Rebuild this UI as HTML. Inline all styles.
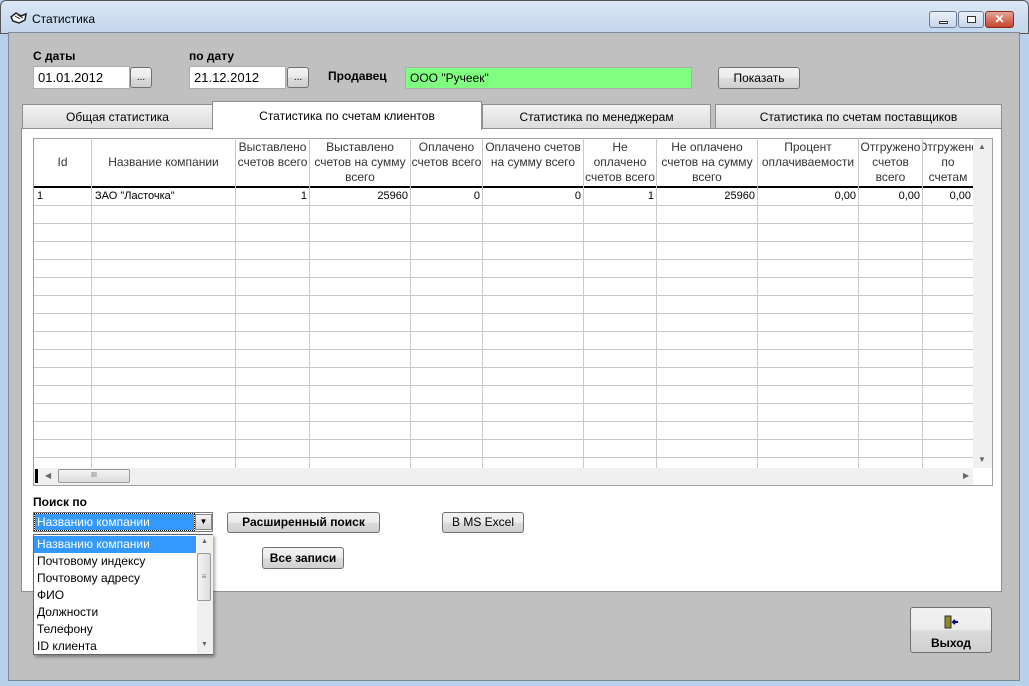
<!DOCTYPE html>
<html><head><meta charset="utf-8"><style>
*{margin:0;padding:0;box-sizing:border-box}
body{width:1029px;height:686px;overflow:hidden;background:#b9d1ea;font-family:"Liberation Sans",sans-serif;font-size:12px;color:#000;position:relative}
.a{position:absolute}
.btn{position:absolute;border:1px solid #707070;border-radius:3px;background:linear-gradient(#f2f2f2,#ebebeb 50%,#dcdcdc 51%,#cfcfcf);text-align:center}
.inp{position:absolute;background:#fff;border:1px solid #abadb3;padding:3px 0 0 4px;font-size:13px}
.tab{position:absolute;top:104px;height:25px;border:1px solid #8e8f8f;background:linear-gradient(#f2f2f2,#dcdcdc);text-align:center;font-size:12px;line-height:24px}
.vl{position:absolute;top:138px;height:330px;width:1px;background:#c8c8c8}
.h{position:absolute;top:139px;height:47px;display:flex;align-items:center;justify-content:center;text-align:center;line-height:15px;color:#333;font-size:12px;white-space:nowrap}
.c{position:absolute;top:189px;font-size:11px;line-height:15px}
.li{height:17px;line-height:17px;padding-left:3px;font-size:12px}
</style></head><body>
<div class="a" style="left:0;top:0;width:1029px;height:34px;background:linear-gradient(#dbe7f4,#c3d6ec);border:1px solid #555;border-radius:6px 6px 0 0"></div>
<svg class="a" style="left:10px;top:11px" width="18" height="14" viewBox="0 0 18 14"><path d="M1 6L6 2L11 5L16 3L15 9L9 12L3 10Z" fill="#fff" stroke="#222" stroke-width="1.5"/><path d="M5 5L10 8M8 4L13 7" stroke="#222"/></svg>
<div class="a" style="left:32px;top:12px;font-size:12px">Статистика</div>
<div class="a" style="left:929px;top:11px;width:28px;height:17px;border:1px solid #6b7d96;border-radius:3px;background:linear-gradient(#e9f0f8,#c8d6e8)"><div class="a" style="left:9px;top:9px;width:9px;height:3px;border:1px solid #333;background:#fff"></div></div>
<div class="a" style="left:958px;top:11px;width:26px;height:17px;border:1px solid #6b7d96;border-radius:3px;background:linear-gradient(#e9f0f8,#c8d6e8)"><div class="a" style="left:8px;top:4px;width:9px;height:7px;border:1px solid #333;background:#fff"></div></div>
<div class="a" style="left:985px;top:11px;width:29px;height:17px;border:1px solid #8a2a1c;border-radius:3px;background:linear-gradient(#e8a496,#c4442c);color:#fff;font-weight:bold;text-align:center;line-height:15px;font-size:12px">✕</div>
<div class="a" style="left:8px;top:32px;width:1012px;height:649px;background:#c0c0c0;border:1px solid #7f8a99"></div>
<div class="a" style="left:33px;top:49px;font-weight:bold">С даты</div>
<div class="a" style="left:189px;top:49px;font-weight:bold">по дату</div>
<div class="inp" style="left:33px;top:66px;width:97px;height:23px">01.01.2012</div>
<div class="btn" style="left:130px;top:67px;width:22px;height:21px;font-size:10px;line-height:20px">...</div>
<div class="inp" style="left:189px;top:66px;width:97px;height:23px">21.12.2012</div>
<div class="btn" style="left:287px;top:67px;width:22px;height:21px;font-size:10px;line-height:20px">...</div>
<div class="a" style="left:328px;top:69px;font-weight:bold">Продавец</div>
<div class="inp" style="left:405px;top:67px;width:287px;height:22px;background:#80ff80;font-size:12px">ООО "Ручеек"</div>
<div class="btn" style="left:718px;top:67px;width:82px;height:22px;line-height:20px">Показать</div>
<div class="a" style="left:21px;top:128px;width:981px;height:464px;background:#fff;border:1px solid #8e8f8f"></div>
<div class="tab" style="left:22px;width:191px">Общая статистика</div>
<div class="tab" style="left:212px;top:101px;width:270px;height:29px;background:#fff;border-bottom:none;line-height:28px">Статистика по счетам клиентов</div>
<div class="tab" style="left:482px;width:229px">Статистика по менеджерам</div>
<div class="tab" style="left:715px;width:287px">Статистика по счетам поставщиков</div>
<div class="a" style="left:33px;top:138px;width:960px;height:348px;border:1px solid #a0a0a0;background:#fff"></div>
<div class="a" style="left:34px;top:188px;width:939px;height:280px;background:repeating-linear-gradient(#fff 0 17px,#c8c8c8 17px 18px)"></div>
<div class="a" style="left:34px;top:186px;width:939px;height:2px;background:#000"></div>
<div class="vl" style="left:91px"></div><div class="vl" style="left:235px"></div><div class="vl" style="left:309px"></div><div class="vl" style="left:410px"></div><div class="vl" style="left:482px"></div><div class="vl" style="left:583px"></div><div class="vl" style="left:656px"></div><div class="vl" style="left:757px"></div><div class="vl" style="left:858px"></div><div class="vl" style="left:922px"></div>
<div class="h" style="left:34px;width:57px">Id</div>
<div class="h" style="left:92px;width:143px">Название компании</div>
<div class="h" style="left:236px;width:73px;align-items:flex-start;padding-top:1px">Выставлено<br>счетов всего</div>
<div class="h" style="left:310px;width:100px">Выставлено<br>счетов на сумму<br>всего</div>
<div class="h" style="left:411px;width:71px;align-items:flex-start;padding-top:1px">Оплачено<br>счетов всего</div>
<div class="h" style="left:483px;width:100px;align-items:flex-start;padding-top:1px">Оплачено счетов<br>на сумму всего</div>
<div class="h" style="left:584px;width:72px">Не<br>оплачено<br>счетов всего</div>
<div class="h" style="left:657px;width:100px">Не оплачено<br>счетов на сумму<br>всего</div>
<div class="h" style="left:758px;width:100px;align-items:flex-start;padding-top:1px">Процент<br>оплачиваемости</div>
<div class="h" style="left:859px;width:63px">Отгружено<br>счетов<br>всего</div>
<div class="h" style="left:923px;width:50px;overflow:hidden"><div>Отгружено<br>по<br>счетам</div></div>
<div class="c" style="left:37px">1</div>
<div class="c" style="left:95px">ЗАО "Ласточка"</div>
<div class="c" style="left:236px;width:71px;text-align:right">1</div>
<div class="c" style="left:310px;width:98px;text-align:right">25960</div>
<div class="c" style="left:411px;width:69px;text-align:right">0</div>
<div class="c" style="left:483px;width:98px;text-align:right">0</div>
<div class="c" style="left:584px;width:70px;text-align:right">1</div>
<div class="c" style="left:657px;width:98px;text-align:right">25960</div>
<div class="c" style="left:758px;width:98px;text-align:right">0,00</div>
<div class="c" style="left:859px;width:61px;text-align:right">0,00</div>
<div class="c" style="left:923px;width:48px;text-align:right">0,00</div>
<div class="a" style="left:973px;top:139px;width:19px;height:329px;background:#f0f0f0"></div>
<div class="a" style="left:978px;top:142px;font-size:8px;color:#666">▲</div>
<div class="a" style="left:978px;top:455px;font-size:8px;color:#666">▼</div>
<div class="a" style="left:34px;top:468px;width:939px;height:17px;background:#f0f0f0"></div>
<div class="a" style="left:35px;top:469px;width:3px;height:14px;background:#000"></div>
<div class="a" style="left:45px;top:471px;font-size:8px;color:#666">◀</div>
<div class="a" style="left:58px;top:469px;width:72px;height:14px;border:1px solid #999;border-radius:2px;background:linear-gradient(#f5f5f5,#dcdcdc);font-size:7px;text-align:center;line-height:12px;color:#666">III</div>
<div class="a" style="left:963px;top:471px;font-size:8px;color:#666">▶</div>
<div class="a" style="left:33px;top:495px;font-weight:bold">Поиск по</div>
<div class="a" style="left:33px;top:512px;width:180px;height:20px;background:#fff;border:1px solid #7a7a7a"></div>
<div class="a" style="left:35px;top:514px;width:159px;height:16px;background:#3399ff;color:#fff;font-size:12px;line-height:16px;padding-left:2px;outline:1px dotted #000">Названию компании</div>
<div class="a" style="left:195px;top:514px;width:17px;height:16px;background:linear-gradient(#f2f2f2,#d5d5d5);border:1px solid #888;font-size:8px;text-align:center;line-height:14px">▼</div>
<div class="btn" style="left:227px;top:512px;width:153px;height:21px;font-weight:bold;line-height:19px">Расширенный поиск</div>
<div class="btn" style="left:442px;top:512px;width:82px;height:21px;line-height:19px">В MS Excel</div>
<div class="btn" style="left:262px;top:547px;width:82px;height:22px;font-weight:bold;line-height:20px">Все записи</div>
<div class="a" style="left:33px;top:534px;width:180px;height:121px;background:#fff;border:1px solid #646464;box-shadow:2px 2px 3px rgba(0,0,0,.35);padding-top:1px">
<div class="li" style="width:162px;background:#3399ff;color:#fff">Названию компании</div>
<div class="li">Почтовому индексу</div>
<div class="li">Почтовому адресу</div>
<div class="li">ФИО</div>
<div class="li">Должности</div>
<div class="li">Телефону</div>
<div class="li">ID клиента</div>
<div class="a" style="left:163px;top:0;width:16px;height:119px;background:#f0f0f0"></div>
<div class="a" style="left:163px;top:18px;width:14px;height:48px;border:1px solid #999;border-radius:2px;background:linear-gradient(90deg,#f5f5f5,#dcdcdc);font-size:8px;text-align:center;line-height:46px;color:#777">≡</div>
<div class="a" style="left:167px;top:3px;font-size:7px;color:#666">▲</div>
<div class="a" style="left:167px;top:106px;font-size:7px;color:#666">▼</div>
</div>
<div class="btn" style="left:910px;top:607px;width:82px;height:46px">
<svg class="a" style="left:33px;top:7px" width="15" height="15" viewBox="0 0 15 15"><rect x="1" y="1" width="6" height="12" fill="#8a8a20" stroke="#333"/><path d="M14 7H9M11 5L9 7L11 9" stroke="#00008b" stroke-width="2" fill="none"/></svg>
<div class="a" style="left:0;top:28px;width:80px;font-weight:bold;font-size:12px">Выход</div>
</div>
</body></html>
